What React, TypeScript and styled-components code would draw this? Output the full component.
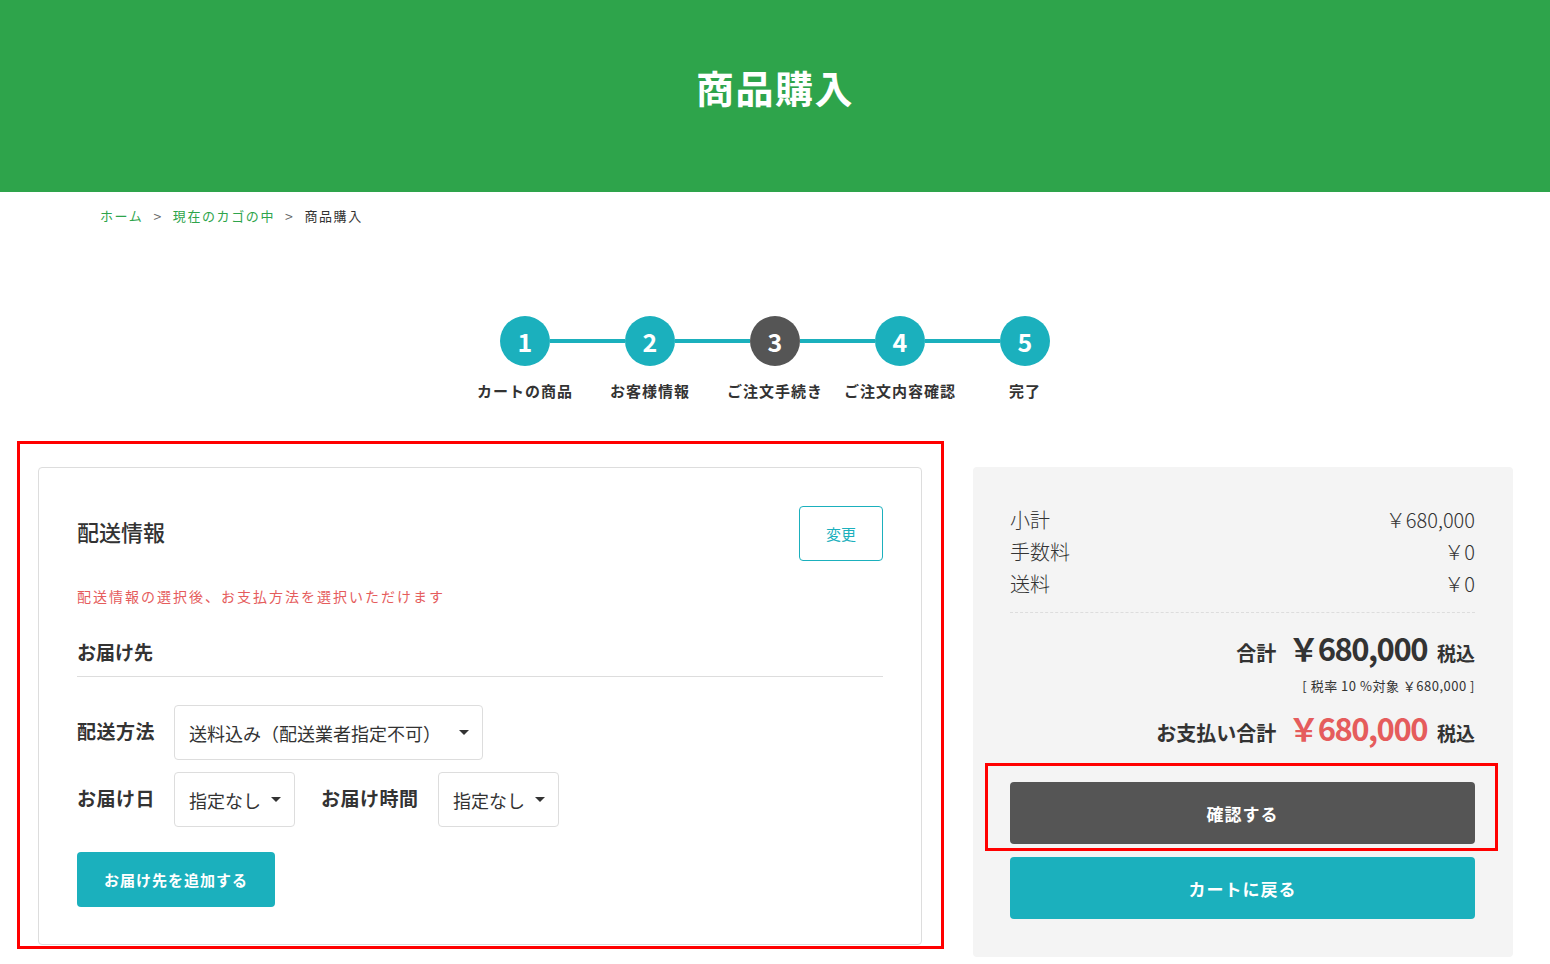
import * as React from "react";
import styled, { createGlobalStyle } from "styled-components";

const GlobalStyle = createGlobalStyle`
  body {
    margin: 0;
    background: #fff;
    color: #333;
    font-family: "Noto Sans CJK JP", "Noto Sans", sans-serif;
  }
`;

const Header = styled.header`
  height: 192px;
  background: #2ea44b;
  display: flex;
  align-items: center;
  justify-content: center;
`;

const PageTitle = styled.h1`
  margin: 0 0 20px;
  color: #fff;
  font-size: 38px;
  font-weight: 700;
  letter-spacing: 1.5px;
`;

const Breadcrumb = styled.nav`
  display: flex;
  align-items: center;
  gap: 10px;
  padding: 15px 0 0 100px;
  font-size: 13px;
  letter-spacing: 1.6px;
  line-height: 18px;
`;

const Crumb = styled.span<{ $link?: boolean }>`
  color: ${(p) => (p.$link ? "#2ea44b" : "#333")};
`;

const Sep = styled.span`
  color: #666;
  font-size: 14px;
`;

const Steps = styled.div`
  margin-top: 91px;
  display: flex;
  flex-direction: column;
  align-items: center;
`;

const CircleRow = styled.div`
  display: flex;
  align-items: center;
`;

const Circle = styled.div<{ $active?: boolean }>`
  width: 50px;
  height: 50px;
  border-radius: 50%;
  background: ${(p) => (p.$active ? "#555" : "#1bb0bd")};
  color: #fff;
  display: flex;
  align-items: center;
  justify-content: center;
  font-size: 25px;
  font-weight: 700;
`;

const Connector = styled.div`
  width: 75px;
  height: 4px;
  background: #1bb0bd;
`;

const LabelRow = styled.div`
  display: flex;
  margin-top: 14px;
`;

const StepLabel = styled.div`
  width: 125px;
  text-align: center;
  font-size: 15px;
  font-weight: 700;
  letter-spacing: 1px;
  color: #333;
  white-space: nowrap;
`;

const Main = styled.div`
  display: flex;
  align-items: flex-start;
  gap: 51px;
  padding: 66px 37px 0 38px;
`;

const Annotated = styled.div`
  position: relative;
`;

const RedFrame = styled.div<{ $t: number; $r: number; $b: number; $l: number }>`
  position: absolute;
  top: ${(p) => p.$t}px;
  right: ${(p) => p.$r}px;
  bottom: ${(p) => p.$b}px;
  left: ${(p) => p.$l}px;
  border: 3px solid #f00;
  pointer-events: none;
`;

const Card = styled.section`
  width: 884px;
  height: 478px;
  box-sizing: border-box;
  border: 1px solid #ddd;
  border-radius: 4px;
  padding: 38px 38px 0 38px;
`;

const CardHead = styled.div`
  display: flex;
  justify-content: space-between;
  align-items: center;
`;

const CardTitle = styled.h2`
  margin: -5px 0 0;
  font-size: 22px;
  font-weight: 500;
  color: #333;
`;

const OutlineButton = styled.button`
  width: 84px;
  height: 55px;
  border: 1px solid #1bb0bd;
  border-radius: 4px;
  background: #fff;
  color: #1bb0bd;
  font-family: inherit;
  font-size: 15px;
`;

const Notice = styled.p`
  margin: 25px 0 0;
  font-size: 14px;
  letter-spacing: 2px;
  color: #e55c5c;
`;

const SubTitle = styled.h3`
  margin: 32px 0 0;
  padding-bottom: 11px;
  border-bottom: 1px solid #ddd;
  font-size: 19px;
  font-weight: 700;
  color: #333;
`;

const FormRow = styled.div<{ $top: number }>`
  display: flex;
  align-items: center;
  margin-top: ${(p) => p.$top}px;
`;

const FieldLabel = styled.span<{ $w: number; $indent?: number }>`
  width: ${(p) => p.$w}px;
  box-sizing: border-box;
  padding-left: ${(p) => p.$indent ?? 0}px;
  font-size: 19px;
  font-weight: 700;
  letter-spacing: 0.5px;
  color: #333;
  margin-top: -4px;
`;

const Select = styled.div<{ $w: number }>`
  width: ${(p) => p.$w}px;
  height: 55px;
  box-sizing: border-box;
  border: 1px solid #ddd;
  border-radius: 4px;
  display: flex;
  align-items: center;
  justify-content: space-between;
  padding: 0 13px 0 14px;
  font-size: 18px;
  color: #333;
  background: #fff;
`;

const Caret = styled.span`
  width: 0;
  height: 0;
  border-left: 5px solid transparent;
  border-right: 5px solid transparent;
  border-top: 5px solid #333;
`;

const FilledButton = styled.button<{ $dark?: boolean; $w?: number; $h?: number; $fs?: number }>`
  width: ${(p) => (p.$w ? `${p.$w}px` : "100%")};
  height: ${(p) => p.$h ?? 62}px;
  border: none;
  border-radius: 4px;
  background: ${(p) => (p.$dark ? "#555" : "#1bb0bd")};
  color: #fff;
  font-family: inherit;
  font-weight: 700;
  font-size: ${(p) => p.$fs ?? 17}px;
  letter-spacing: 1px;
`;

const AddWrap = styled.div`
  margin-top: 25px;
`;

const Summary = styled.aside`
  width: 540px;
  height: 490px;
  box-sizing: border-box;
  background: #f4f4f4;
  border-radius: 4px;
  padding: 37px 38px 0 37px;
`;

const Line = styled.div`
  display: flex;
  justify-content: space-between;
  font-size: 20px;
  font-weight: 300;
  line-height: 32px;
  color: #333;
`;

const Dashed = styled.div`
  border-top: 1px dashed #ddd;
  margin-top: 12px;
`;

const TotalRow = styled.div<{ $top: number }>`
  display: flex;
  justify-content: flex-end;
  align-items: baseline;
  gap: 12px;
  margin-top: ${(p) => p.$top}px;
  color: #333;
`;

const TotalLabel = styled.span`
  font-size: 20px;
  font-weight: 700;
`;

const Amount = styled.span<{ $red?: boolean }>`
  font-size: 31px;
  font-weight: 700;
  letter-spacing: -1.5px;
  color: ${(p) => (p.$red ? "#e55c5c" : "#333")};
`;

const TaxIn = styled.span`
  font-size: 19px;
  font-weight: 700;
  margin-left: -2px;
`;

const TaxNote = styled.div`
  text-align: right;
  font-size: 13px;
  letter-spacing: 0.5px;
  color: #333;
  margin-top: 6px;
`;

const ButtonStack = styled.div`
  display: flex;
  flex-direction: column;
  gap: 13px;
  margin-top: 32px;
`;

const steps = ["カートの商品", "お客様情報", "ご注文手続き", "ご注文内容確認", "完了"];

const costs: [string, string][] = [
  ["小計", "￥680,000"],
  ["手数料", "￥0"],
  ["送料", "￥0"],
];

export default function App() {
  return (
    <>
      <GlobalStyle />
      <Header>
        <PageTitle>商品購入</PageTitle>
      </Header>
      <Breadcrumb>
        <Crumb $link>ホーム</Crumb>
        <Sep>&gt;</Sep>
        <Crumb $link>現在のカゴの中</Crumb>
        <Sep>&gt;</Sep>
        <Crumb>商品購入</Crumb>
      </Breadcrumb>

      <Steps>
        <CircleRow>
          {steps.map((s, i) => (
            <React.Fragment key={s}>
              {i > 0 && <Connector />}
              <Circle $active={i === 2}>{i + 1}</Circle>
            </React.Fragment>
          ))}
        </CircleRow>
        <LabelRow>
          {steps.map((s) => (
            <StepLabel key={s}>{s}</StepLabel>
          ))}
        </LabelRow>
      </Steps>

      <Main>
        <Annotated>
          <Card>
            <CardHead>
              <CardTitle>配送情報</CardTitle>
              <OutlineButton>変更</OutlineButton>
            </CardHead>
            <Notice>配送情報の選択後、お支払方法を選択いただけます</Notice>
            <SubTitle>お届け先</SubTitle>
            <FormRow $top={28}>
              <FieldLabel $w={97}>配送方法</FieldLabel>
              <Select $w={309}>
                送料込み（配送業者指定不可）
                <Caret />
              </Select>
            </FormRow>
            <FormRow $top={12}>
              <FieldLabel $w={97}>お届け日</FieldLabel>
              <Select $w={121}>
                指定なし
                <Caret />
              </Select>
              <FieldLabel $w={143} $indent={26}>
                お届け時間
              </FieldLabel>
              <Select $w={121}>
                指定なし
                <Caret />
              </Select>
            </FormRow>
            <AddWrap>
              <FilledButton $w={198} $h={55} $fs={15}>
                お届け先を追加する
              </FilledButton>
            </AddWrap>
          </Card>
          <RedFrame $t={-26} $r={-22} $b={-4} $l={-21} />
        </Annotated>

        <Summary>
          {costs.map(([k, v]) => (
            <Line key={k}>
              <span>{k}</span>
              <span>{v}</span>
            </Line>
          ))}
          <Dashed />
          <TotalRow $top={12}>
            <TotalLabel>合計</TotalLabel>
            <Amount>￥680,000</Amount>
            <TaxIn>税込</TaxIn>
          </TotalRow>
          <TaxNote>[ 税率 10 %対象 ￥680,000 ]</TaxNote>
          <TotalRow $top={10}>
            <TotalLabel>お支払い合計</TotalLabel>
            <Amount $red>￥680,000</Amount>
            <TaxIn>税込</TaxIn>
          </TotalRow>
          <ButtonStack>
            <Annotated>
              <FilledButton $dark>確認する</FilledButton>
              <RedFrame $t={-19} $r={-23} $b={-7} $l={-25} />
            </Annotated>
            <FilledButton>カートに戻る</FilledButton>
          </ButtonStack>
        </Summary>
      </Main>
    </>
  );
}
